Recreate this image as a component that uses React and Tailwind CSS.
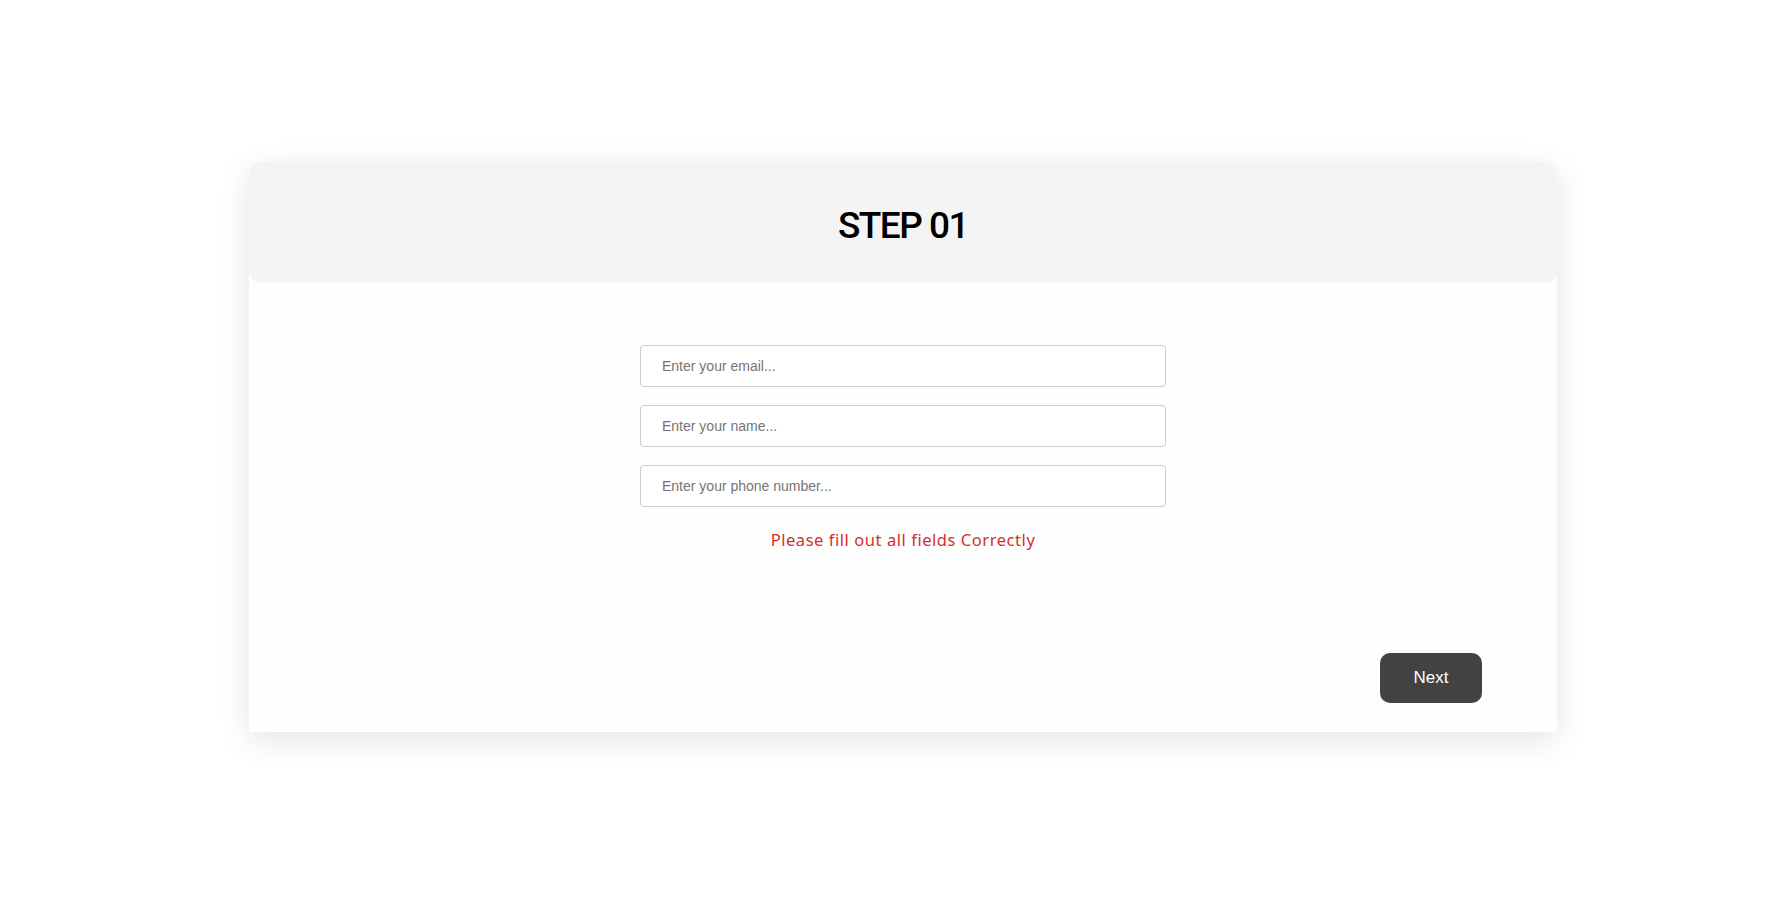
import React from 'react';

const fields = [
  { type: 'email', placeholder: 'Enter your email...' },
  { type: 'text', placeholder: 'Enter your name...' },
  { type: 'tel', placeholder: 'Enter your phone number...' },
];

const App = () => {
  return (
    <div className="min-h-screen w-full bg-white pl-[249px] pt-[162px]">
      {/* Karte: Schritt 1 */}
      <div className="flex w-[1308px] flex-col rounded-t-xl rounded-b-[4px] bg-[#fefefe] shadow-[0_8px_32px_rgba(0,0,0,0.11)]">
        <div className="flex h-[121px] items-center justify-center rounded-xl bg-[#f4f4f4] pt-[5px]">
          <h1 className="font-['Roboto',sans-serif] text-[37px] font-medium leading-none tracking-[-1.5px] text-black">
            STEP 01
          </h1>
        </div>

        <div className="flex flex-col items-center pt-[62px]">
          <div className="flex w-[526px] flex-col gap-[18px]">
            {fields.map((f) => (
              <input
                key={f.placeholder}
                type={f.type}
                placeholder={f.placeholder}
                className="h-[42px] w-full rounded-[4px] border border-[#cccccc] bg-white px-[21px] font-['Liberation_Sans',Arial,sans-serif] text-[14px] text-[#333] outline-none placeholder:text-[#757575]"
              />
            ))}
          </div>
          <p className="mt-[21px] font-['Noto_Sans',sans-serif] text-[16.5px] leading-6 tracking-[0.55px] text-[#d32f2f]">
            Please fill out all fields Correctly
          </p>
        </div>

        <div className="flex justify-end pr-[75px] pb-[29px] pt-[101px]">
          <button className="h-[50px] w-[102px] rounded-[10px] bg-[#424242] font-['Liberation_Sans',Arial,sans-serif] text-[17px] text-white">
            Next
          </button>
        </div>
      </div>
    </div>
  );
};

export default App;
